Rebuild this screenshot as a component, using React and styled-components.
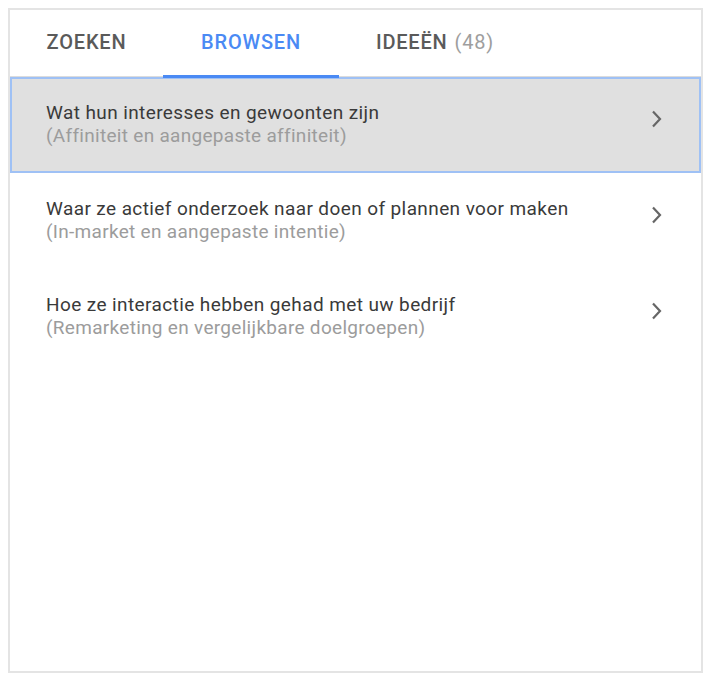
import React, { useState } from "react";
import styled, { createGlobalStyle } from "styled-components";

const GlobalStyle = createGlobalStyle`
  body {
    margin: 0;
    background: #ffffff;
    font-family: Roboto, "Noto Sans", Arial, sans-serif;
  }
`;

const Page = styled.div`
  padding: 8px;
`;

const Panel = styled.div`
  box-sizing: border-box;
  width: 695px;
  height: 665px;
  border: 2px solid #e4e4e4;
  background: #ffffff;
  display: flex;
  flex-direction: column;
`;

const TabBar = styled.div`
  display: flex;
  height: 66px;
  border-bottom: 1px solid #dcdcdc;
`;

const Tab = styled.div`
  position: relative;
  display: flex;
  align-items: center;
  justify-content: center;
  width: ${(p) => p.width}px;
  padding-bottom: 2px;
  font-size: 20px;
  font-weight: 500;
  letter-spacing: 0.8px;
  color: ${(p) => (p.active ? "#4a8af4" : "#5a5a5a")};
  cursor: pointer;

  &::after {
    content: "";
    display: ${(p) => (p.active ? "block" : "none")};
    position: absolute;
    left: 0;
    right: 0;
    bottom: -2px;
    height: 3px;
    background: #4a8af4;
  }
`;

const Count = styled.span`
  margin-left: 7px;
  font-weight: 400;
  color: #9e9e9e;
`;

const List = styled.div`
  display: flex;
  flex-direction: column;
`;

const Row = styled.div`
  box-sizing: border-box;
  height: 96px;
  display: flex;
  align-items: center;
  padding: 0 34px 0 34px;
  background: ${(p) => (p.selected ? "#e0e0e0" : "#ffffff")};
  border: 2px solid ${(p) => (p.selected ? "#9fc1f5" : "transparent")};
  cursor: pointer;
`;

const RowText = styled.div`
  flex: 1;
  display: flex;
  flex-direction: column;
  padding-bottom: 2px;
`;

const Title = styled.div`
  font-size: 19px;
  line-height: 23px;
  letter-spacing: 0.4px;
  color: #3a3a3a;
`;

const Subtitle = styled.div`
  font-size: 19px;
  line-height: 23px;
  letter-spacing: 0.3px;
  color: #9c9c9c;
`;

const ChevronIcon = styled.svg`
  flex: none;
  margin-bottom: 12px;
`;

const Chevron = () => (
  <ChevronIcon width="16" height="22" viewBox="0 0 16 22">
    <path d="M4 3.5 L11 11 L4 18.5" fill="none" stroke="#666666" strokeWidth="2.2" />
  </ChevronIcon>
);

const tabs = [
  { label: "ZOEKEN", width: 153 },
  { label: "BROWSEN", width: 176 },
  { label: "IDEEËN", count: "(48)", width: 192 },
];

const rows = [
  {
    title: "Wat hun interesses en gewoonten zijn",
    sub: "(Affiniteit en aangepaste affiniteit)",
  },
  {
    title: "Waar ze actief onderzoek naar doen of plannen voor maken",
    sub: "(In-market en aangepaste intentie)",
  },
  {
    title: "Hoe ze interactie hebben gehad met uw bedrijf",
    sub: "(Remarketing en vergelijkbare doelgroepen)",
  },
];

function App() {
  const [activeTab, setActiveTab] = useState(1);
  const [selected, setSelected] = useState(0);

  return (
    <Page>
      <GlobalStyle />
      <Panel>
        <TabBar>
          {tabs.map((t, i) => (
            <Tab
              key={t.label}
              width={t.width}
              active={i === activeTab}
              onClick={() => setActiveTab(i)}
            >
              {t.label}
              {t.count && <Count>{t.count}</Count>}
            </Tab>
          ))}
        </TabBar>
        <List>
          {rows.map((r, i) => (
            <Row key={i} selected={i === selected} onClick={() => setSelected(i)}>
              <RowText>
                <Title>{r.title}</Title>
                <Subtitle>{r.sub}</Subtitle>
              </RowText>
              <Chevron />
            </Row>
          ))}
        </List>
      </Panel>
    </Page>
  );
}

export default App;
